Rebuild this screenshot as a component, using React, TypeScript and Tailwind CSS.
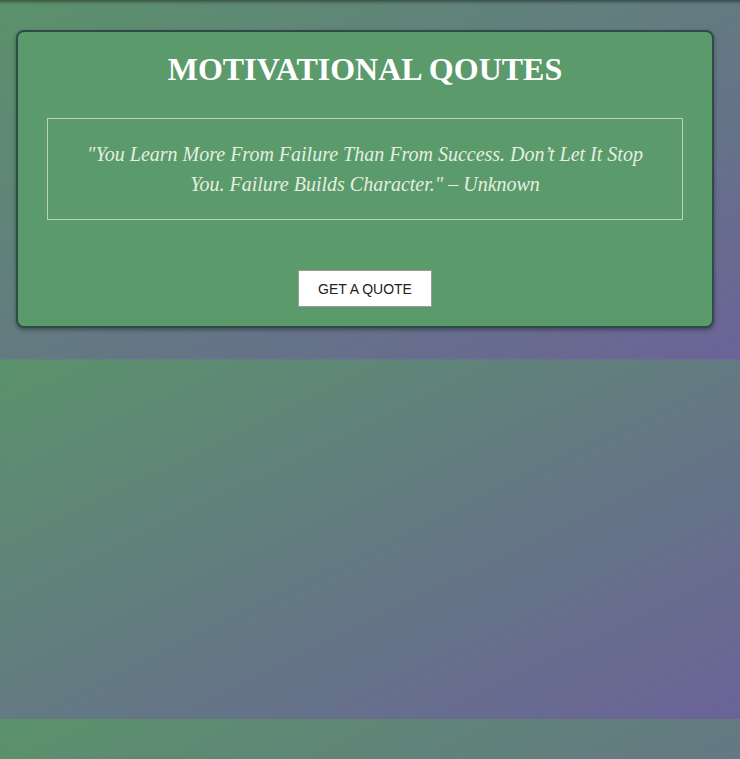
export default function App() {
  return (
    <div className="min-h-[759px] w-full bg-[linear-gradient(to_bottom_right,#5b926b,#6b6398)] bg-[length:100%_359.5px] bg-repeat shadow-[inset_0_5px_4px_-4px_rgba(0,0,0,0.6)] pt-[30px] pb-[32px]">
      <div className="ml-4 w-[698px] rounded-lg border-2 border-[#2e4b47] bg-[#5b9a6a] px-[29px] pt-[19px] pb-[19px] shadow-[0_2px_4px_rgba(0,0,0,0.35)]">
        <h1 className="text-center text-[32px] font-bold leading-[37px] text-white [font-family:'Liberation_Serif',serif]">
          MOTIVATIONAL QOUTES
        </h1>
        <div className="mt-[30px] border border-[#b9d3bb] px-6 py-5 text-center">
          <p className="text-[20px] italic leading-[30px] text-[#e4efe2] [font-family:'Liberation_Serif',serif]">
            "You Learn More From Failure Than From Success. Don’t Let It Stop You. Failure Builds Character." – Unknown
          </p>
        </div>
        <div className="mt-[50px] flex justify-center">
          <button className="border border-[#9a9a9a] bg-white px-[19px] py-[9.5px] text-[14px] leading-4 text-[#222] [font-family:'Liberation_Sans',Arial,sans-serif]">
            GET A QUOTE
          </button>
        </div>
      </div>
    </div>
  );
}
